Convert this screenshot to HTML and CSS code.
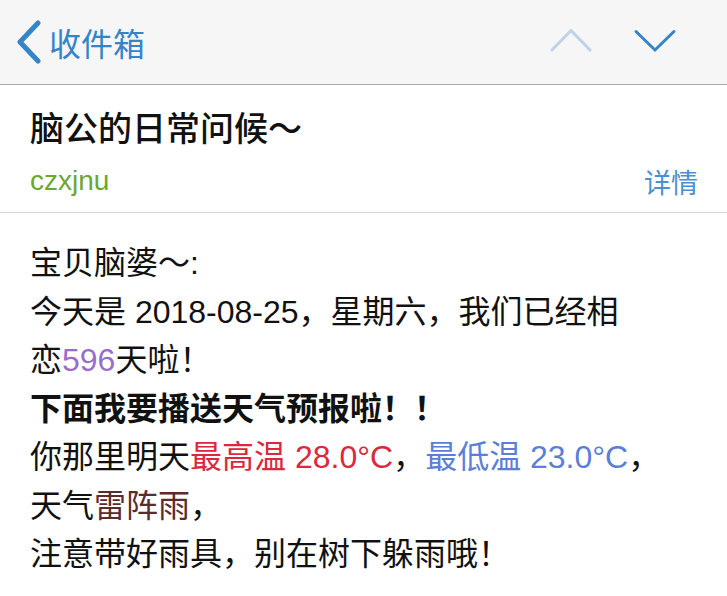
FILE: index.html
```html
<!DOCTYPE html>
<html lang="zh-CN">
<head>
<meta charset="utf-8">
<title>收件箱</title>
<link rel="stylesheet" href="styles.css">
</head>
<body>
<header class="nav">
  <a class="back">
    <svg class="back-icon" width="28" height="44" viewBox="0 0 28 44"><path d="M24 3 L6 22 L24 41" fill="none" stroke="#3584c8" stroke-width="5" stroke-linecap="round" stroke-linejoin="round"/></svg>
    <span class="back-text">收件箱</span>
  </a>
  <div class="arrows">
    <svg width="44" height="26" viewBox="0 0 44 26"><path d="M3 21 L22 1.5 L41 21" fill="none" stroke="#bcd3e8" stroke-width="3" stroke-linecap="round" stroke-linejoin="miter"/></svg>
    <svg width="44" height="26" viewBox="0 0 44 26"><path d="M3 2.5 L22 21 L41 2.5" fill="none" stroke="#3584c8" stroke-width="3" stroke-linecap="round" stroke-linejoin="miter"/></svg>
  </div>
</header>

<section class="meta">
  <h1 class="subject">脑公的日常问候～</h1>
  <div class="sender-row">
    <span class="sender">czxjnu</span>
    <span class="details">详情</span>
  </div>
</section>

<main class="content">
  <div>宝贝脑婆～:</div>
  <div>今天是 2018-08-25，星期六，我们已经相<br>恋<span class="days">596</span>天啦！</div>
  <div class="strong">下面我要播送天气预报啦！！</div>
  <div>你那里明天<span class="hot">最高温 28.0°C</span>，<span class="cold">最低温 23.0°C</span>，</div>
  <div>天气<span class="weather">雷阵雨</span>，</div>
  <div>注意带好雨具，别在树下躲雨哦！</div>
</main>
</body>
</html>
```

FILE: styles.css
```css
* { box-sizing: border-box; }
html, body { margin: 0; padding: 0; background: #ffffff; }
body {
  font-family: "Liberation Sans", "Noto Sans CJK SC", sans-serif;
  color: #111111;
  width: 727px;
}

.nav {
  height: 85px;
  background: #f6f6f6;
  border-bottom: 1px solid #a9a9a9;
  display: flex;
  align-items: center;
  justify-content: space-between;
  padding: 0 50px 0 14px;
}
.back {
  display: flex;
  align-items: center;
  color: #3584c8;
}
.back-icon { display: block; }
.back-text {
  margin-left: 7px;
  font-family: "Noto Sans CJK SC", sans-serif;
  font-size: 32px;
  line-height: 44px;
}
.arrows {
  display: flex;
  align-items: center;
  gap: 40px;
}
.arrows svg { display: block; }

.meta {
  padding: 20px 30px 13px 30px;
  border-bottom: 1px solid #d4d4d4;
}
.subject {
  margin: 0;
  font-family: "Noto Sans CJK SC", sans-serif;
  font-size: 34px;
  font-weight: 500;
  line-height: 44px;
  color: #111111;
}
.sender-row {
  margin-top: 14px;
  display: flex;
  align-items: center;
  justify-content: space-between;
  height: 36px;
}
.sender {
  color: #6aa82e;
  font-size: 28px;
}
.details {
  color: #4a8fcf;
  font-family: "Noto Sans CJK SC", sans-serif;
  font-size: 27px;
  margin-right: -1px;
}

.content {
  padding: 26px 30px 0 30px;
  font-size: 32px;
  line-height: 48.5px;
}
.strong { font-weight: 700; }
.days { color: #9a6dcc; }
.hot { color: #dc283c; }
.cold { color: #5b7fd8; }
.weather { color: #5c2b2b; }
```
